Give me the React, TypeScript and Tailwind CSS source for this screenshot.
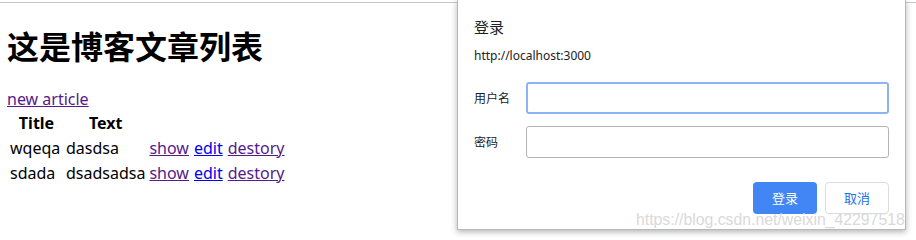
import React from 'react';

const rows = [
  { title: 'wqeqa', text: 'dasdsa' },
  { title: 'sdada', text: 'dsadsadsa' },
];

const sans = { fontFamily: '"Noto Sans", "Noto Sans CJK SC", sans-serif' };

export default function App() {
  return (
    <div className="relative w-[916px] h-[240px] overflow-hidden bg-white text-black" style={sans}>
      <div className="h-[2px]" />
      <div className="border-t border-[#c6c6c6] px-[7px]">
        <h1 className="mt-[22px] text-[32px] leading-[40px] font-bold" style={{ fontFamily: '"Noto Sans CJK SC", sans-serif' }}>
          这是博客文章列表
        </h1>
        <a href="#" className="block mt-[24px] text-[16px] leading-[20px] text-[#551a8b] underline w-fit">
          new article
        </a>
        <table className="mt-[1px] text-[16px] border-separate border-spacing-x-[0px]">
          <thead>
            <tr className="h-[25px]">
              <th className="w-[57px] pl-[2px] text-center font-bold">Title</th>
              <th className="w-[81px] pl-[2px] text-center font-bold">Text</th>
            </tr>
          </thead>
          <tbody>
            {rows.map(r => (
              <tr key={r.title} className="h-[25px]">
                <td className="pl-[3px]">{r.title}</td>
                <td className="pl-[2px] whitespace-nowrap">{r.text}</td>
                <td className="pl-[4px]">
                  <a href="#" className="text-[#551a8b] underline">show</a>
                </td>
                <td className="pl-[5px]">
                  <a href="#" className="text-[#0000ee] underline">edit</a>
                </td>
                <td className="pl-[5px]">
                  <a href="#" className="text-[#551a8b] underline">destory</a>
                </td>
              </tr>
            ))}
          </tbody>
        </table>
      </div>

      {/* login dialog */}
      <div className="absolute left-[457px] top-0 w-[449px] h-[230px] bg-white border border-t-0 border-[#b8b8b8] shadow-[0_2px_6px_rgba(0,0,0,0.3)]" style={{ fontFamily: '"Noto Sans CJK SC", "Noto Sans", sans-serif' }}>
        <div className="pl-[16px] pr-[16px]">
          <div className="pt-[17px] text-[15px] leading-[20px] text-[#202124]">登录</div>
          <div className="mt-[11px] text-[12px] leading-[16px] text-[#202124]" style={sans}>http://localhost:3000</div>
          <div className="mt-[18px] flex flex-col gap-[12px]">
            <div className="flex items-center">
              <span className="w-[52px] text-[12px] text-[#202124]">用户名</span>
              <div className="w-[364px] h-[32px] rounded-[3px] border-2 border-[#8cb3f6]" />
            </div>
            <div className="flex items-center">
              <span className="w-[52px] text-[12px] text-[#202124]">密码</span>
              <div className="w-[364px] h-[32px] rounded-[3px] border border-[#b4b4b4]" />
            </div>
          </div>
          <div className="mt-[24px] flex justify-end gap-[8px]">
            <button className="w-[64px] h-[32px] rounded-[4px] bg-[#4285f4] text-white text-[13px]">登录</button>
            <button className="w-[64px] h-[32px] rounded-[4px] border border-[#dadce0] bg-white text-[#1a73e8] text-[13px]">取消</button>
          </div>
        </div>
      </div>

      <div className="absolute left-[636px] top-[210px] text-[15.8px] leading-[20px] text-[#d9d9d9] whitespace-nowrap" style={{ fontFamily: '"Liberation Sans", Arial, sans-serif' }}>
        https://blog.csdn.net/weixin_42297518
      </div>
    </div>
  );
}
